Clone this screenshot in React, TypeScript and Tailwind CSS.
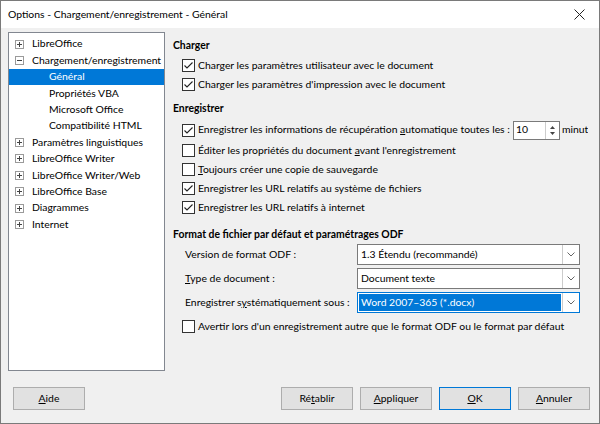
import React from "react";

const Check = ({ checked }: { checked: boolean }) => (
  <span className="w-[13px] h-[13px] border border-[#333333] bg-white flex items-center justify-center shrink-0">
    {checked && (
      <svg width="11" height="11" viewBox="0 0 11 11">
        <path d="M1.5 5.5 L4 8 L9.5 2.5" stroke="#222" strokeWidth="1.1" fill="none" />
      </svg>
    )}
  </span>
);

const Expander = ({ open }: { open?: boolean }) => (
  <span className="w-[9px] h-[9px] border border-[#9a9a9a] bg-white flex items-center justify-center shrink-0">
    <svg width="7" height="7" viewBox="0 0 7 7">
      <path d="M1 3.5 H6" stroke="#444" strokeWidth="1" />
      {!open && <path d="M3.5 1 V6" stroke="#444" strokeWidth="1" />}
    </svg>
  </span>
);

const CheckRow = ({ checked, children }: { checked: boolean; children: React.ReactNode }) => (
  <div className="h-[19px] flex items-center gap-[2px] pl-[9px] whitespace-nowrap">
    <Check checked={checked} />
    <span className="ml-[1px]">{children}</span>
  </div>
);

const Select = ({ value, active }: { value: string; active?: boolean }) => (
  <div
    className={
      "w-[223px] h-[21px] flex border bg-white shrink-0 " +
      (active ? "border-[#0078d7]" : "border-[#7a7a7a]")
    }
  >
    <div className="flex-1 flex items-center p-[1px]">
      <span
        className={
          "h-full w-full flex items-center pl-[2px] " + (active ? "bg-[#0078d7] text-white" : "")
        }
      >
        {value}
      </span>
    </div>
    <div className="w-[17px] border-l border-[#cccccc] bg-white flex items-center justify-center">
      <svg width="8" height="5" viewBox="0 0 8 5">
        <path d="M0.5 0.5 L4 4 L7.5 0.5" stroke="#666" fill="none" />
      </svg>
    </div>
  </div>
);

const Button = ({ children, primary }: { children: React.ReactNode; primary?: boolean }) => (
  <div
    className={
      "w-[72px] h-[23px] flex items-center justify-center bg-[#e1e1e1] border " +
      (primary ? "border-[#0078d7]" : "border-[#adadad]")
    }
  >
    {children}
  </div>
);

const tree = [
  { label: "LibreOffice", level: 0 },
  { label: "Chargement/enregistrement", level: 0, open: true },
  { label: "Général", level: 1, selected: true },
  { label: "Propriétés VBA", level: 1 },
  { label: "Microsoft Office", level: 1 },
  { label: "Compatibilité HTML", level: 1 },
  { label: "Paramètres linguistiques", level: 0 },
  { label: "LibreOffice Writer", level: 0 },
  { label: "LibreOffice Writer/Web", level: 0 },
  { label: "LibreOffice Base", level: 0 },
  { label: "Diagrammes", level: 0 },
  { label: "Internet", level: 0 },
];

export default function App() {
  return (
    <div
      className="w-[600px] h-[424px] border border-[#7a7a7a] flex flex-col text-[10.4px] text-black overflow-hidden"
      style={{ fontFamily: "Lato, sans-serif" }}
    >
      <div className="h-[27px] bg-white flex items-center justify-between pl-[7px] pr-[14px] shrink-0">
        <span>Options - Chargement/enregistrement - Général</span>
        <svg width="11" height="11" viewBox="0 0 11 11">
          <path d="M0.5 0.5 L10.5 10.5 M10.5 0.5 L0.5 10.5" stroke="#222" strokeWidth="1" />
        </svg>
      </div>

      <div className="flex-1 bg-[#f0f0f0] flex flex-col">
        <div className="flex pt-[4px] pl-[7px]">
          <div className="w-[157px] h-[339px] bg-white border border-[#828790] pt-[3px] shrink-0">
            {tree.map((t) => (
              <div
                key={t.label}
                className={
                  "h-[16.4px] flex items-center whitespace-nowrap " +
                  (t.selected ? "bg-[#0078d7] text-white" : "")
                }
              >
                {t.level === 0 ? (
                  <div className="flex items-center pl-[6px] gap-[8px]">
                    <Expander open={t.open} />
                    <span>{t.label}</span>
                  </div>
                ) : (
                  <span className="pl-[40px]">{t.label}</span>
                )}
              </div>
            ))}
          </div>

          <div className="w-[423px] pl-[8px] overflow-hidden">
            <div className="font-bold h-[16px] flex items-center mt-[6px]">Charger</div>
            <div className="mt-[2px]">
              <CheckRow checked>Charger les paramètres utilisateur avec le document</CheckRow>
              <CheckRow checked>Charger les paramètres d'impression avec le document</CheckRow>
            </div>

            <div className="font-bold h-[16px] flex items-center mt-[7px]">Enregistrer</div>
            <div className="h-[22px] flex items-center gap-[2px] pl-[9px] whitespace-nowrap mt-[2px]">
              <Check checked />
              <span className="ml-[1px]">
                Enregistrer les informations de récupération <u>a</u>utomatique toutes les :
              </span>
              <div className="w-[47px] h-[19px] border border-[#7a7a7a] bg-white flex ml-[1px] shrink-0">
                <span className="flex-1 flex items-center pl-[2px]">10</span>
                <div className="w-[14px] border-l border-[#cccccc] flex flex-col items-center justify-center gap-[3px]">
                  <svg width="5" height="3" viewBox="0 0 5 3">
                    <path d="M0 3 L2.5 0 L5 3 Z" fill="#444" />
                  </svg>
                  <svg width="5" height="3" viewBox="0 0 5 3">
                    <path d="M0 0 L2.5 3 L5 0 Z" fill="#444" />
                  </svg>
                </div>
              </div>
              <span>minutes</span>
            </div>
            <CheckRow checked={false}>
              Éditer les propriétés du document <u>a</u>vant l'enregistrement
            </CheckRow>
            <CheckRow checked={false}>
              <u>T</u>oujours créer une copie de sauvegarde
            </CheckRow>
            <CheckRow checked>Enregistrer les URL relatifs au système de fichiers</CheckRow>
            <CheckRow checked>Enregistrer les URL relatifs à internet</CheckRow>

            <div className="font-bold h-[16px] flex items-center mt-[10px]">
              Format de fichier par défaut et paramétrages ODF
            </div>
            <div className="flex flex-col gap-[3px] mt-[1px] pl-[12px]">
              <div className="flex items-center">
                <span className="w-[172px] whitespace-nowrap">Version de format ODF :</span>
                <Select value="1.3 Étendu (recommandé)" />
              </div>
              <div className="flex items-center">
                <span className="w-[172px] whitespace-nowrap">
                  <u>T</u>ype de document :
                </span>
                <Select value="Document texte" />
              </div>
              <div className="flex items-center">
                <span className="w-[172px] whitespace-nowrap">
                  Enregistrer s<u>y</u>stématiquement sous :
                </span>
                <Select value="Word 2007–365 (*.docx)" active />
              </div>
            </div>
            <div className="mt-[4px]">
              <CheckRow checked={false}>
                Avertir lors d'un enregistrement autre que le format ODF ou le format par défaut
              </CheckRow>
            </div>
          </div>
        </div>

        <div className="flex items-center pt-[16px] pl-[12px] pr-[9px]">
          <Button>
            <u>A</u>ide
          </Button>
          <div className="flex-1" />
          <div className="flex gap-[7px]">
            <Button>
              Ré<u>t</u>ablir
            </Button>
            <Button>
              <u>A</u>ppliquer
            </Button>
            <Button primary>
              <u>O</u>K
            </Button>
            <Button>
              <u>A</u>nnuler
            </Button>
          </div>
        </div>
      </div>
    </div>
  );
}
